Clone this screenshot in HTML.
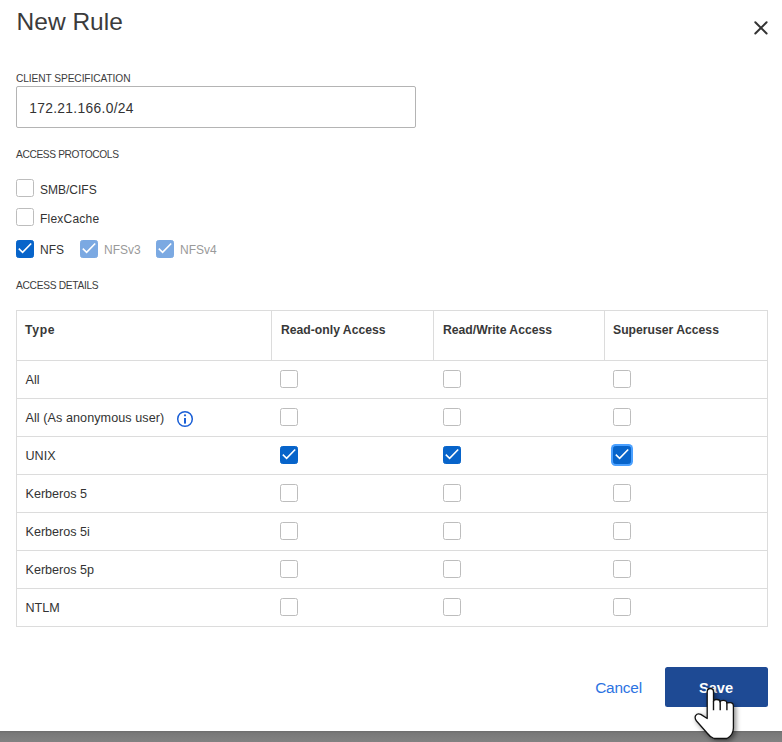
<!DOCTYPE html>
<html>
<head>
<meta charset="utf-8">
<style>
html,body{margin:0;padding:0;background:#fff;width:782px;height:742px;overflow:hidden;position:relative;font-family:"Liberation Sans",sans-serif;color:#333;}
.t{position:absolute;white-space:nowrap;line-height:1;}
.lbl{font-size:10.2px;color:#3c3c3c;}
.cb{position:absolute;width:16px;height:16px;border:1px solid #bdbdbd;border-radius:2.5px;background:#fff;}
.cb.on{background:#0764ca;border-color:#0764ca;}
.cb.dis{background:#7ba9e2;border-color:#7ba9e2;}
.cb svg{position:absolute;left:-1px;top:-1px;}
.hl{position:absolute;background:#dcdcdc;}
.row{font-size:12.6px;color:#333;}
.hd{font-size:12.2px;font-weight:700;color:#383838;}
</style>
</head>
<body>
<!-- Title -->
<div class="t" style="left:16.6px;top:10.2px;font-size:24.5px;color:#3b3b3b;">New Rule</div>
<!-- Close X -->
<svg style="position:absolute;left:750px;top:17px;" width="22" height="22" viewBox="0 0 22 22"><path d="M5.3 5.2 L16.6 16.5 M16.6 5.2 L5.3 16.5" stroke="#333" stroke-width="2" stroke-linecap="round"/></svg>

<div class="t lbl" style="left:16px;top:74px;letter-spacing:-0.09px;">CLIENT SPECIFICATION</div>
<div style="position:absolute;left:16px;top:86px;width:398px;height:40px;border:1px solid #b4b4b4;border-radius:2px;"></div>
<div class="t" style="left:29.2px;top:101.7px;font-size:13.8px;letter-spacing:0.33px;color:#333;">172.21.166.0/24</div>

<div class="t lbl" style="left:16px;top:149.5px;letter-spacing:-0.37px;">ACCESS PROTOCOLS</div>

<div class="cb" style="left:16px;top:179px;"></div>
<div class="t" style="left:40px;top:184px;font-size:12px;">SMB/CIFS</div>
<div class="cb" style="left:16px;top:208px;"></div>
<div class="t" style="left:40px;top:212.8px;font-size:12px;letter-spacing:0.22px;">FlexCache</div>

<div class="cb on" style="left:16px;top:240px;"><svg width="18" height="18" viewBox="0 0 18 18"><path d="M2.8 8.7 L6.6 12.3 L15.2 3.5" fill="none" stroke="#fff" stroke-width="1.6"/></svg></div>
<div class="t" style="left:40px;top:243.8px;font-size:12px;">NFS</div>
<div class="cb dis" style="left:80px;top:240px;"><svg width="18" height="18" viewBox="0 0 18 18"><path d="M2.8 8.7 L6.6 12.3 L15.2 3.5" fill="none" stroke="#fff" stroke-width="1.6"/></svg></div>
<div class="t" style="left:104px;top:243.8px;font-size:12px;color:#9a9a9a;">NFSv3</div>
<div class="cb dis" style="left:156px;top:240px;"><svg width="18" height="18" viewBox="0 0 18 18"><path d="M2.8 8.7 L6.6 12.3 L15.2 3.5" fill="none" stroke="#fff" stroke-width="1.6"/></svg></div>
<div class="t" style="left:180px;top:243.8px;font-size:12px;color:#9a9a9a;">NFSv4</div>

<div class="t lbl" style="left:16px;top:281.1px;letter-spacing:-0.29px;">ACCESS DETAILS</div>

<!-- Table -->
<div style="position:absolute;left:16px;top:310px;width:750px;height:315px;border:1px solid #dcdcdc;"></div>
<div class="hl" style="left:271px;top:310px;width:1px;height:50px;"></div>
<div class="hl" style="left:433px;top:310px;width:1px;height:50px;"></div>
<div class="hl" style="left:604px;top:310px;width:1px;height:50px;"></div>
<div class="hl" style="left:16px;top:360px;width:752px;height:1px;"></div>
<div class="hl" style="left:16px;top:398px;width:752px;height:1px;"></div>
<div class="hl" style="left:16px;top:436px;width:752px;height:1px;"></div>
<div class="hl" style="left:16px;top:474px;width:752px;height:1px;"></div>
<div class="hl" style="left:16px;top:512px;width:752px;height:1px;"></div>
<div class="hl" style="left:16px;top:550px;width:752px;height:1px;"></div>
<div class="hl" style="left:16px;top:588px;width:752px;height:1px;"></div>

<div class="t hd" style="left:25px;top:324.1px;letter-spacing:0.7px;">Type</div>
<div class="t hd" style="left:281px;top:324.1px;">Read-only Access</div>
<div class="t hd" style="left:443px;top:324.1px;">Read/Write Access</div>
<div class="t hd" style="left:613px;top:324.1px;">Superuser Access</div>

<div class="t row" style="left:25.5px;top:374.3px;">All</div>
<div class="t row" style="left:25.5px;top:412.3px;letter-spacing:0.07px;">All (As anonymous user)</div>
<div class="t row" style="left:25.5px;top:450.3px;">UNIX</div>
<div class="t row" style="left:25.5px;top:488.3px;">Kerberos 5</div>
<div class="t row" style="left:25.5px;top:526.3px;">Kerberos 5i</div>
<div class="t row" style="left:25.5px;top:564.3px;">Kerberos 5p</div>
<div class="t row" style="left:25.5px;top:602.3px;">NTLM</div>

<!-- info icon -->
<svg style="position:absolute;left:176px;top:410px;" width="18" height="18" viewBox="0 0 18 18"><circle cx="9" cy="9" r="7.3" fill="none" stroke="#1a5fd6" stroke-width="1.5"/><circle cx="9" cy="5.3" r="1.1" fill="#1a5fd6"/><rect x="8" y="8" width="2" height="5.6" fill="#1a5fd6"/></svg>

<!-- table checkboxes -->
<div class="cb" style="left:280px;top:370px;"></div>
<div class="cb" style="left:443px;top:370px;"></div>
<div class="cb" style="left:613px;top:370px;"></div>
<div class="cb" style="left:280px;top:408px;"></div>
<div class="cb" style="left:443px;top:408px;"></div>
<div class="cb" style="left:613px;top:408px;"></div>
<div class="cb on" style="left:280px;top:446px;"><svg width="18" height="18" viewBox="0 0 18 18"><path d="M2.8 8.7 L6.6 12.3 L15.2 3.5" fill="none" stroke="#fff" stroke-width="1.6"/></svg></div>
<div class="cb on" style="left:443px;top:446px;"><svg width="18" height="18" viewBox="0 0 18 18"><path d="M2.8 8.7 L6.6 12.3 L15.2 3.5" fill="none" stroke="#fff" stroke-width="1.6"/></svg></div>
<div class="cb on" style="left:613px;top:446px;box-shadow:0 0 0 2px #4aa0ff;"><svg width="18" height="18" viewBox="0 0 18 18"><path d="M2.8 8.7 L6.6 12.3 L15.2 3.5" fill="none" stroke="#fff" stroke-width="1.6"/></svg></div>
<div class="cb" style="left:280px;top:484px;"></div>
<div class="cb" style="left:443px;top:484px;"></div>
<div class="cb" style="left:613px;top:484px;"></div>
<div class="cb" style="left:280px;top:522px;"></div>
<div class="cb" style="left:443px;top:522px;"></div>
<div class="cb" style="left:613px;top:522px;"></div>
<div class="cb" style="left:280px;top:560px;"></div>
<div class="cb" style="left:443px;top:560px;"></div>
<div class="cb" style="left:613px;top:560px;"></div>
<div class="cb" style="left:280px;top:598px;"></div>
<div class="cb" style="left:443px;top:598px;"></div>
<div class="cb" style="left:613px;top:598px;"></div>

<!-- buttons -->
<div class="t" style="left:595.2px;top:679.9px;font-size:15.4px;letter-spacing:-0.2px;color:#2c73e2;">Cancel</div>
<div style="position:absolute;left:665px;top:667px;width:103px;height:40px;background:#1e4a94;border-radius:2.5px;"></div>
<div class="t" style="left:699px;top:680.8px;font-size:14.6px;font-weight:700;color:#fff;">Save</div>

<!-- bottom bar -->
<div style="position:absolute;left:0;top:731px;width:782px;height:11px;background:linear-gradient(#6c6c6c 0,#787878 2px,#828282 11px);"></div>

<!-- hand cursor -->
<svg style="position:absolute;left:692px;top:684px;overflow:visible;filter:drop-shadow(2.5px 2.5px 2.5px rgba(0,0,0,0.45));" width="48" height="58" viewBox="0 0 48 58">
<path d="M15.2,8 Q15.2,4.5 18.35,4.5 Q21.5,4.5 21.5,8 L21.5,17.5 Q21.5,15.5 24.8,15.5 Q28.1,15.5 28.1,18.3 Q28.1,16.3 31.45,16.3 Q34.8,16.3 34.8,19.3 Q34.8,18.7 38.1,18.7 Q41.4,18.7 41.4,22.2 L41.4,44 Q41.4,51 35,54.5 L22,54.5 Q18,53 15.5,49.5 L4.5,37 Q2.3,34.2 3.6,31.6 Q5.4,29 8.8,30.4 L15.2,34.5 Z" fill="#fff" stroke="#111" stroke-width="1.3" stroke-linejoin="round"/>
<path d="M21.5,17.2 V26.3 M28.2,18.2 V26.3 M34.9,19.2 V26.3" stroke="#111" stroke-width="1.4"/>
</svg>
</body>
</html>
